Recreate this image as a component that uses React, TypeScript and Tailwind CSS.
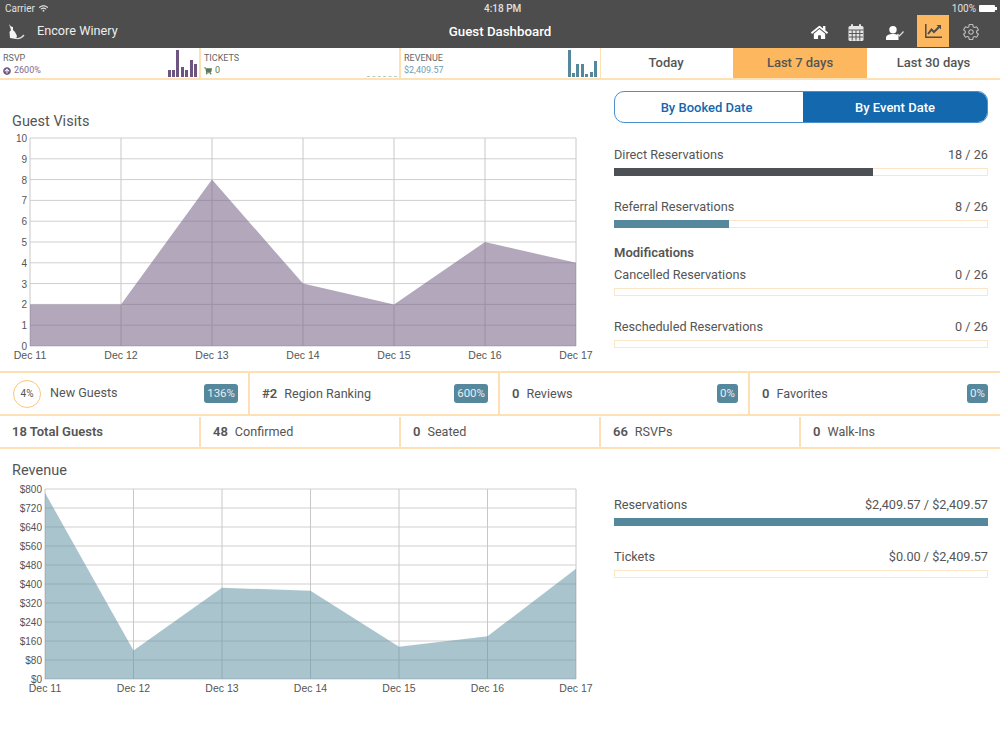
import React from "react";
import { FaArrowCircleUp, FaHome, FaShoppingCart, FaWifi } from "react-icons/fa";
import { IoSettingsOutline } from "react-icons/io5";

const DATES = ["Dec 11", "Dec 12", "Dec 13", "Dec 14", "Dec 15", "Dec 16", "Dec 17"];

type ChartProps = {
  left: number;
  right: number;
  top: number;
  bottom: number;
  height: number;
  labels: string[];
  values: number[]; // 0..1 of the y axis
  fill: string;
  opacity: number;
};

const AreaChart = ({ left, right, top, bottom, height, labels, values, fill, opacity }: ChartProps) => {
  const stepX = (right - left) / (DATES.length - 1);
  const stepY = (bottom - top) / (labels.length - 1);
  const points = values.map((v, i) => `${left + i * stepX},${bottom - v * (bottom - top)}`).join(" ");

  return (
    <svg width={600} height={height} className="block font-['Liberation_Sans',sans-serif]">
      {labels.map((label, i) => (
        <g key={label}>
          <line x1={left} x2={right} y1={top + i * stepY} y2={top + i * stepY} stroke="#cfcfcf" strokeWidth={1} />
          <text x={left - 3} y={top + i * stepY + 4} textAnchor="end" fontSize={10} fill="#555">
            {label}
          </text>
        </g>
      ))}
      {DATES.map((date, i) => (
        <g key={date}>
          <line x1={left + i * stepX} x2={left + i * stepX} y1={top} y2={bottom} stroke="#c8c8c8" strokeWidth={1} />
          <text x={left + i * stepX} y={bottom + 13} textAnchor="middle" fontSize={10.5} fill="#555">
            {date}
          </text>
        </g>
      ))}
      <polygon points={`${left},${bottom} ${points} ${right},${bottom}`} fill={fill} fillOpacity={opacity} />
    </svg>
  );
};

const MiniBars = ({ heights, color }: { heights: number[]; color: string }) => (
  <div className="mt-[2px] flex h-[27px] items-end gap-[1.4px]">
    {heights.map((h, i) => (
      <div key={i} className="w-[3px]" style={{ height: h, backgroundColor: color }} />
    ))}
  </div>
);

const ProgressRow = ({ label, value, pct, color }: { label: string; value: string; pct: number; color: string }) => (
  <div className="h-[52px] pt-[1px]">
    <div className="flex justify-between text-[12.7px] leading-[16px] text-[#555]">
      <span>{label}</span>
      <span>{value}</span>
    </div>
    <div className="mt-[5px] h-[8px] ring-1 ring-inset ring-[#fde6c8]">
      <div className="h-full" style={{ width: `${pct}%`, backgroundColor: color }} />
    </div>
  </div>
);

const Badge = ({ children }: { children: React.ReactNode }) => (
  <span className="rounded-[3px] bg-[#55879d] px-[3px] py-[2px] text-[11.5px] leading-[15px] text-[#e6eef2]">{children}</span>
);

const App = () => {
  return (
    <div className="h-[750px] w-[1000px] overflow-hidden bg-white font-['Roboto','Liberation_Sans',sans-serif] text-[#555]">
      {/* header */}
      <div className="h-[48px] bg-[#4d4d4d] text-white">
        <div className="relative flex h-[17px] items-center justify-between pl-[5px] pr-[3px] text-[10px] text-[#e0e0e0]">
          <div className="flex items-center gap-[4px]">
            Carrier <FaWifi size={9} />
          </div>
          <div className="absolute left-[484px] font-medium">4:18 PM</div>
          <div className="flex items-center gap-[3px]">
            100%
            <div className="flex items-center">
              <div className="h-[7px] w-[16px] rounded-[1px] bg-white" />
              <div className="h-[3px] w-[2px] bg-white" />
            </div>
          </div>
        </div>
        <div className="relative flex h-[31px] items-center">
          <svg width={17} height={16} viewBox="0 0 17 16" className="ml-[8px] -mt-[1px]">
            <path d="M1 0 L3 2.5 L5 3 L5 6 L7 8 L9 12 L8 15 L2 14 L1.5 8 L3 6 Z" fill="#f4f4f4" />
            <path d="M7 14 Q12 16 16 11" stroke="#d8d8d8" strokeWidth={1.3} fill="none" />
          </svg>
          <span className="ml-[12px] -mt-[3px] text-[12.7px] text-[#ededed]">Encore Winery</span>
          <span className="absolute left-0 -mt-[2px] w-full text-center text-[13.3px] font-medium">Guest Dashboard</span>
          <div className="ml-auto flex h-full items-center">
            <FaHome size={17} className="mr-[20px] -mt-[1px]" />
            <svg width={16} height={17} viewBox="0 0 16 17" className="mr-[22px] -mt-[1px]">
              <rect x={0.5} y={2} width={15} height={15} rx={1.5} fill="#e6e6e6" />
              <path d="M0.5 6 H15.5 M1 9.5 H15 M1 13 H15 M4.2 6 V16.5 M8 6 V16.5 M11.8 6 V16.5" stroke="#4d4d4d" strokeWidth={0.9} />
              <rect x={3} y={0} width={2} height={4} rx={1} fill="#e6e6e6" />
              <rect x={11} y={0} width={2} height={4} rx={1} fill="#e6e6e6" />
            </svg>
            <svg width={18} height={14} viewBox="0 0 18 14" className="mr-[13px]">
              <circle cx={7} cy={3.7} r={3.7} fill="#fff" />
              <path d="M0 14 V12 C0 9 3 8 7 8 C9.5 8 11.5 8.5 12.5 9.5 L12.5 14 Z" fill="#fff" />
              <path d="M11.5 8 L13.5 10 L17.5 5.5" stroke="#e0e0e0" strokeWidth={1.2} fill="none" />
            </svg>
            <div className="-mt-[3px] flex h-[32px] w-[32px] items-center justify-center bg-[#fdb85f]">
              <svg width={17} height={14} viewBox="0 0 17 14">
                <path d="M0.8 0 V13.2 H17" stroke="#4d4d4d" strokeWidth={1.5} fill="none" />
                <path d="M3 10 L6.5 5.5 L9 8 L14 3" stroke="#4d4d4d" strokeWidth={2} fill="none" />
                <path d="M11.5 1 H16 V5.5 Z" fill="#4d4d4d" />
              </svg>
            </div>
            <IoSettingsOutline size={18} className="ml-[13px] mr-[20px] -mt-[1px] text-[#bdbdbd]" />
          </div>
        </div>
      </div>

      {/* kpi strip */}
      <div className="flex h-[32px] border-b-2 border-[#fde0b4]">
        <div className="flex w-[201px] items-start justify-between border-r-2 border-[#fde0b4] pl-[3px] pr-[2px]">
          <div className="pt-[5px] text-[9px] leading-[11px]">
            <div className="text-[#666]">RSVP</div>
            <div className="mt-[1px] flex items-center gap-[3px] text-[#7d6a8f]">
              <FaArrowCircleUp size={8} className="text-[#6d5481]" /> 2600%
            </div>
          </div>
          <MiniBars heights={[7, 7, 27, 10, 7, 17, 13]} color="#6d5481" />
        </div>
        <div className="flex w-[200px] items-start justify-between border-r-2 border-[#fde0b4] pl-[3px] pr-[2px]">
          <div className="pt-[5px] text-[9px] leading-[11px]">
            <div className="text-[#666]">TICKETS</div>
            <div className="mt-[1px] flex items-center gap-[3px] text-[#5a7a5a]">
              <FaShoppingCart size={8} /> 0
            </div>
          </div>
          <div className="mt-[28px] w-[30px] border-t border-dashed border-[#b9cbb9]" />
        </div>
        <div className="flex w-[200px] items-start justify-between border-r border-[#fde0b4] pl-[3px] pr-[3px]">
          <div className="pt-[5px] text-[9px] leading-[11px]">
            <div className="text-[#666]">REVENUE</div>
            <div className="mt-[1px] text-[#6f9db1]">$2,409.57</div>
          </div>
          <MiniBars heights={[27, 4, 13, 13, 3, 5, 16]} color="#55879d" />
        </div>
        <div className="flex flex-1 text-[13px] font-medium leading-[30px]">
          <div className="w-[132px] pr-[2px] text-center">Today</div>
          <div className="w-[134px] bg-[#fdb85f] text-center">Last 7 days</div>
          <div className="w-[133px] text-center">Last 30 days</div>
        </div>
      </div>

      {/* guest visits */}
      <div className="flex h-[291px]">
        <div className="w-[600px]">
          <div className="pl-[12px] pt-[33px] text-[14.5px] leading-[17px]">Guest Visits</div>
          <AreaChart
            left={30}
            right={576}
            top={8}
            bottom={216}
            height={238}
            labels={["10", "9", "8", "7", "6", "5", "4", "3", "2", "1", "0"]}
            values={[0.2, 0.2, 0.8, 0.3, 0.2, 0.5, 0.4]}
            fill="#7a6489"
            opacity={0.57}
          />
        </div>
        <div className="ml-[14px] w-[374px] pt-[11px]">
          <div className="flex h-[32px] overflow-hidden rounded-[10px] border border-[#4a90cc] text-[13px] font-medium leading-[31px]">
            <div className="w-[188px] pr-[5px] text-center text-[#1368ae]">By Booked Date</div>
            <div className="flex-1 bg-[#1368ae] text-center text-white">By Event Date</div>
          </div>
          <div className="mt-[23px]">
            <ProgressRow label="Direct Reservations" value="18 / 26" pct={69.2} color="#4d5054" />
            <ProgressRow label="Referral Reservations" value="8 / 26" pct={30.8} color="#55879d" />
          </div>
          <div className="-mt-[5px] text-[13px] font-semibold leading-[16px]">Modifications</div>
          <div className="mt-[5px]">
            <ProgressRow label="Cancelled Reservations" value="0 / 26" pct={0} color="#55879d" />
            <ProgressRow label="Rescheduled Reservations" value="0 / 26" pct={0} color="#55879d" />
          </div>
        </div>
      </div>

      {/* stat rows */}
      <div className="grid h-[45px] grid-cols-4 border-y-2 border-[#fde0b4] text-[12.6px]">
        <div className="flex items-center justify-between border-r-2 border-[#fde0b4] pl-[13px] pr-[10px]">
          <div className="flex items-center gap-[9px]">
            <div className="flex h-[28px] w-[28px] items-center justify-center rounded-full border border-[#fdc678] text-[10px]">4%</div>
            New Guests
          </div>
          <Badge>136%</Badge>
        </div>
        <div className="flex items-center justify-between border-r-2 border-[#fde0b4] pl-[12px] pr-[10px]">
          <div>
            <span className="mr-[7px] text-[13px] font-semibold">#2</span>Region Ranking
          </div>
          <Badge>600%</Badge>
        </div>
        <div className="flex items-center justify-between border-r-2 border-[#fde0b4] pl-[12px] pr-[10px]">
          <div>
            <span className="mr-[7px] text-[13px] font-semibold">0</span>Reviews
          </div>
          <Badge>0%</Badge>
        </div>
        <div className="flex items-center justify-between pl-[12px] pr-[12px]">
          <div>
            <span className="mr-[7px] text-[13px] font-semibold">0</span>Favorites
          </div>
          <Badge>0%</Badge>
        </div>
      </div>
      <div className="grid h-[33px] grid-cols-[201px_200px_200px_200px_1fr] border-b-2 border-[#fde0b4] pt-[1px] text-[12.6px]">
        <div className="flex items-center border-r-2 border-[#fde0b4] pl-[12px] text-[13px] font-semibold">18 Total Guests</div>
        <div className="flex items-center border-r-2 border-[#fde0b4] pl-[12px]">
          <span className="mr-[7px] text-[13px] font-semibold">48</span>Confirmed
        </div>
        <div className="flex items-center border-r-2 border-[#fde0b4] pl-[12px]">
          <span className="mr-[7px] text-[13px] font-semibold">0</span>Seated
        </div>
        <div className="flex items-center border-r-2 border-[#fde0b4] pl-[12px]">
          <span className="mr-[7px] text-[13px] font-semibold">66</span>RSVPs
        </div>
        <div className="flex items-center pl-[12px]">
          <span className="mr-[7px] text-[13px] font-semibold">0</span>Walk-Ins
        </div>
      </div>

      {/* revenue */}
      <div className="flex">
        <div className="w-[600px]">
          <div className="pl-[12px] pt-[13px] text-[14.5px] leading-[17px]">Revenue</div>
          <AreaChart
            left={45}
            right={576}
            top={10}
            bottom={200}
            height={230}
            labels={["$800", "$720", "$640", "$560", "$480", "$400", "$320", "$240", "$160", "$80", "$0"]}
            values={[0.98, 0.15, 0.48, 0.465, 0.17, 0.225, 0.58]}
            fill="#6593a6"
            opacity={0.55}
          />
        </div>
        <div className="ml-[14px] w-[374px] pt-[47px]">
          <ProgressRow label="Reservations" value="$2,409.57 / $2,409.57" pct={100} color="#55879d" />
          <ProgressRow label="Tickets" value="$0.00 / $2,409.57" pct={0} color="#55879d" />
        </div>
      </div>
    </div>
  );
};

export default App;
